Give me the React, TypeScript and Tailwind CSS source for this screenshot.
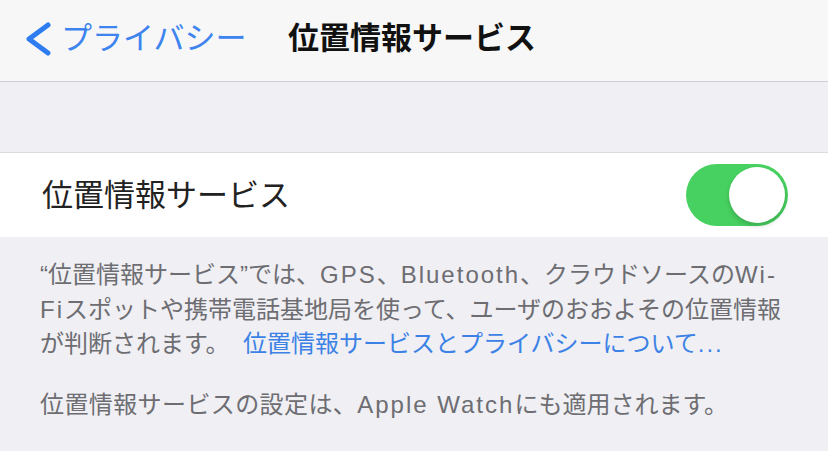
const jp = { fontFamily: '"Liberation Sans", "Noto Sans CJK JP", sans-serif' };

function BackChevron() {
  return (
    <svg width="30" height="34" viewBox="0 0 30 34" className="shrink-0">
      <polyline
        points="25,3 6,17 25,31"
        fill="none"
        stroke="#2f7cf0"
        strokeWidth="5"
        strokeLinecap="round"
        strokeLinejoin="round"
      />
    </svg>
  );
}

function Toggle({ on }: { on: boolean }) {
  return (
    <div
      className={`flex h-[62px] w-[102px] items-center rounded-full p-[3px] ${
        on ? "justify-end bg-[#47d160]" : "justify-start bg-[#e5e5ea]"
      }`}
    >
      <div className="h-[56px] w-[56px] rounded-full bg-white shadow-[0_3px_5px_rgba(0,0,0,0.18)]" />
    </div>
  );
}

// latin runs in the footnote sit a bit wider than the default glyphs
function L({ children }: { children: React.ReactNode }) {
  return <span className="tracking-[2px]">{children}</span>;
}

export default function App() {
  return (
    <div className="flex h-[451px] w-[828px] flex-col overflow-hidden bg-[#efeff4]" style={jp}>
      {/* nav */}
      <div className="grid h-[82px] grid-cols-[1fr_auto_1fr] items-center border-b border-[#cfcfd3] bg-[#f7f7f8] pb-[4px]">
        <div className="flex items-center pl-[23px]">
          <BackChevron />
          <span className="ml-[8px] text-[31px] leading-none text-[#3d84ee]">プライバシー</span>
        </div>
        <h1 className="pr-[4px] text-[31px] font-semibold leading-none text-[#111]">位置情報サービス</h1>
        <div />
      </div>

      <div className="h-[71px] border-b border-[#dcdce0]" />

      {/* row */}
      <div className="flex h-[84px] items-center justify-between bg-white pl-[42px] pr-[40px]">
        <span className="text-[31px] leading-none text-[#222]">位置情報サービス</span>
        <Toggle on={true} />
      </div>

      {/* footer */}
      <div className="px-[40px] pt-[21px] text-[24px] leading-[34.5px] text-[#6d6d72]">
        <p className="whitespace-nowrap">
          “位置情報サービス”では、<L>GPS</L>、<L>Bluetooth</L>、クラウドソースの<L>Wi-</L>
          <br />
          <L>Fi</L>スポットや携帯電話基地局を使って、ユーザのおおよその位置情報
          <br />
          が判断されます。&nbsp;&nbsp;
          <span className="text-[#3c82e6]">
            位置情報サービスとプライバシーについて<span className="tracking-[2px]">...</span>
          </span>
        </p>
        <p className="mt-[26px] whitespace-nowrap">
          <span className="tracking-[0.4px]">位置情報サービスの設定は、</span>
          <L>Apple Watch</L>にも適用されます。
        </p>
      </div>
    </div>
  );
}
